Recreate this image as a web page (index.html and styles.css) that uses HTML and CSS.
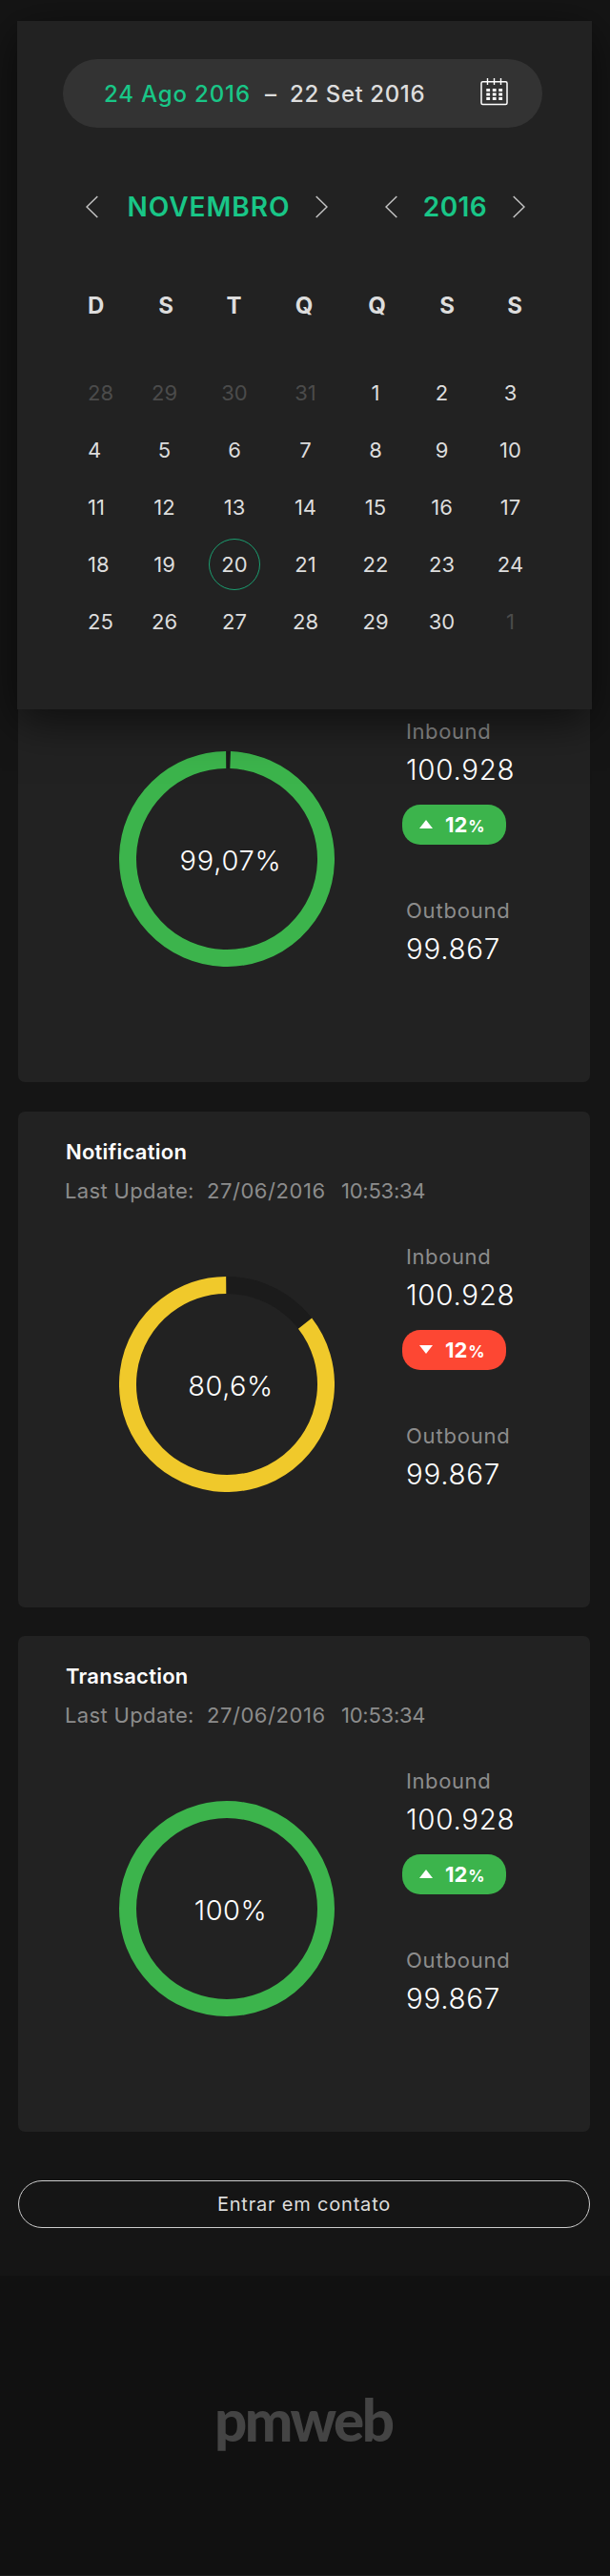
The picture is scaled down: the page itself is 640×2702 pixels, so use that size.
FILE: index.html
```html
<!DOCTYPE html>
<html lang="pt-BR">
<head>
<meta charset="utf-8">
<title>pmweb</title>
<link rel="stylesheet" href="styles.css">
</head>
<body>
<section class="calendar">
  <div class="range">
    <span class="range-from">24 Ago 2016</span>
    <span class="range-dash">–</span>
    <span class="range-to">22 Set 2016</span>
    <svg class="range-icon" width="29" height="29" viewBox="0 0 29 29">
      <rect x="1" y="3.7" width="27" height="23.8" rx="1.5" fill="none" stroke="#fff" stroke-width="1.5"/>
      <path d="M7.5 0v7M14.5 0v7M21.500 0v7" stroke="#fff" stroke-width="1.400"/>
      <path d="M6.300 12.500h16.800M6.300 17h16.800M6.300 21.500h16.800" stroke="#fff" stroke-width="2.800" stroke-dasharray="3.800 2.700"/>
    </svg>
  </div>
  <div class="pickers">
    <div class="picker picker-month">
      <svg class="chevron" viewBox="0 0 13 24"><path d="M12.300 1L1 12l11.300 11"/></svg>
      <span class="picker-label month-label">NOVEMBRO</span>
      <svg class="chevron" viewBox="0 0 13 24"><path d="M.7 1L12 12L.7 23"/></svg>
    </div>
    <div class="picker picker-year">
      <svg class="chevron" viewBox="0 0 13 24"><path d="M12.300 1L1 12l11.300 11"/></svg>
      <span class="picker-label year-label">2016</span>
      <svg class="chevron" viewBox="0 0 13 24"><path d="M.7 1L12 12L.7 23"/></svg>
    </div>
  </div>
  <div class="weekdays"><span>D</span><span>S</span><span>T</span><span>Q</span><span>Q</span><span>S</span><span>S</span></div>
  <div class="days">
    <span class="out">28</span><span class="out">29</span><span class="out">30</span><span class="out">31</span><span>1</span><span>2</span><span>3</span>
    <span>4</span><span>5</span><span>6</span><span>7</span><span>8</span><span>9</span><span>10</span>
    <span>11</span><span>12</span><span>13</span><span>14</span><span>15</span><span>16</span><span>17</span>
    <span>18</span><span>19</span><span class="today">20</span><span>21</span><span>22</span><span>23</span><span>24</span>
    <span>25</span><span>26</span><span>27</span><span>28</span><span>29</span><span>30</span><span class="out">1</span>
  </div>
</section>

<main class="cards">
  <article class="card card-first">
    <div class="card-body">
      <div class="ring">
        <svg viewBox="0 0 226 226"><circle class="track" cx="113" cy="113" r="104"/><circle class="arc green" cx="113" cy="113" r="104" pathLength="100" stroke-dasharray="99.300 .7" transform="rotate(-88 113 113)"/></svg>
        <span class="ring-value rv-a">99,07%</span>
      </div>
      <div class="stats">
        <div class="label label-in">Inbound</div>
        <div class="value value-in">100.928</div>
        <div class="badge up"><svg viewBox="0 0 14 9"><path d="M7 0l7 9H0z"/></svg><b>12</b><small>%</small></div>
        <div class="label label-out">Outbound</div>
        <div class="value value-out">99.867</div>
      </div>
    </div>
  </article>
  <article class="card">
    <h2 class="title">Notification</h2>
    <p class="update"><span class="u-label">Last Update:</span><span class="u-date">27/06/2016</span><span class="u-time">10:53:34</span></p>
    <div class="card-body">
      <div class="ring">
        <svg viewBox="0 0 226 226"><circle class="track" cx="113" cy="113" r="104"/><circle class="arc yellow" cx="113" cy="113" r="104" pathLength="360" stroke-dasharray="307.500 52.500" transform="rotate(-37.900 113 113)"/></svg>
        <span class="ring-value rv-b">80,6%</span>
      </div>
      <div class="stats">
        <div class="label label-in">Inbound</div>
        <div class="value value-in">100.928</div>
        <div class="badge down"><svg viewBox="0 0 14 9"><path d="M0 0h14L7 9z"/></svg><b>12</b><small>%</small></div>
        <div class="label label-out">Outbound</div>
        <div class="value value-out">99.867</div>
      </div>
    </div>
  </article>
  <article class="card">
    <h2 class="title title-b">Transaction</h2>
    <p class="update"><span class="u-label">Last Update:</span><span class="u-date">27/06/2016</span><span class="u-time">10:53:34</span></p>
    <div class="card-body">
      <div class="ring">
        <svg viewBox="0 0 226 226"><circle class="arc green" cx="113" cy="113" r="104"/></svg>
        <span class="ring-value rv-c">100%</span>
      </div>
      <div class="stats">
        <div class="label label-in">Inbound</div>
        <div class="value value-in">100.928</div>
        <div class="badge up"><svg viewBox="0 0 14 9"><path d="M7 0l7 9H0z"/></svg><b>12</b><small>%</small></div>
        <div class="label label-out">Outbound</div>
        <div class="value value-out">99.867</div>
      </div>
    </div>
  </article>
  <a class="contact">Entrar em contato</a>
</main>

<footer class="footer">
  <svg class="logo" width="240" height="110" viewBox="0 0 240 110"><text x="25" y="72" textLength="189" lengthAdjust="spacing">pmweb</text></svg>
</footer>
</body>
</html>
```
FILE: styles.css
```css
* { box-sizing: border-box; }
body {
  margin: 0;
  width: 640px;
  height: 2702px;
  position: relative;
  overflow-x: hidden;
  background: #151515;
  color: #ddd;
  font-family: Inter, "Open Sans", sans-serif;
  font-size: 22px;
  display: flex;
  flex-direction: column;
}
span, b, small, a { white-space: nowrap; }

/* calendar overlay covers the first card's header */
.calendar {
  position: absolute;
  z-index: 2;
  left: 18px;
  top: 22px;
  width: 603px;
  height: 722px;
  padding: 40px 52px 0 48px;
  background: #222;
  box-shadow: 0 12px 44px rgba(0, 0, 0, .6);
}
.range {
  display: flex;
  align-items: center;
  height: 72px;
  padding: 0 36px 0 43px;
  border-radius: 36px;
  background: #333;
  font-size: 24px;
  font-weight: 500;
}
.range-from { width: 169px; color: #19c687; letter-spacing: .85px; }
.range-dash { width: 26px; }
.range-to { flex: 1; letter-spacing: .6px; }
.range-icon { flex: none; margin-top: -4px; }

.pickers { display: flex; margin-top: 67px; padding: 0 18px 0 24px; justify-content: space-between; }
.picker { display: flex; align-items: center; justify-content: space-between; height: 32px; }
.picker-month { width: 254px; }
.picker-year { width: 147px; }
.chevron { width: 13px; height: 24px; fill: none; stroke: #c4c4c4; stroke-width: 1.5; }
.picker-label { color: #19c687; font-size: 28px; font-weight: 600; letter-spacing: .4px; }
.month-label { letter-spacing: 1px; padding-left: 4px; }

.weekdays, .days { display: grid; margin-left: 26px; }
.weekdays {
  grid-template-columns: 44px 76px 67px 80px 73px 74px 68px;
  margin-top: 68px;
  line-height: 40px;
  font-size: 24px;
  font-weight: 700;
  text-align: center;
}
.weekdays span:first-child { text-align: left; }
.days {
  grid-template-columns: 44px 73px 74px 75px 72px 67px 77px;
  grid-auto-rows: 60px;
  margin-top: 41px;
  align-items: center;
  justify-items: center;
}
.days span:nth-child(7n+1) { justify-self: start; }
.out { color: #4b4b4b; }
.today {
  display: grid;
  place-items: center;
  width: 54px;
  height: 54px;
  border: 1px solid #1b9e70;
  border-radius: 50%;
}

.cards { padding: 615px 21px 0 19px; height: 2387px; }
.card {
  display: flex;
  flex-direction: column;
  height: 520px;
  padding: 27px 0 0 49px;
  margin-bottom: 30px;
  border-radius: 7px;
  background: #222;
}
.card-first { margin-bottom: 31px; }
.title { margin: 0; color: #fff; font-size: 22px; line-height: 31px; font-weight: 600; letter-spacing: .25px; padding-left: 1px; }
.update { display: flex; margin: 10px 0 0; line-height: 30px; color: #8c8c8c; font-weight: 400; letter-spacing: .35px; }
.u-label { width: 149px; }
.u-date { width: 141px; letter-spacing: .55px; }
.u-time { letter-spacing: -.25px; }
.card-body { display: flex; height: 383px; margin-top: auto; padding-left: 57px; }
.ring { display: grid; width: 226px; height: 226px; margin-top: 36px; place-items: center; }
.ring > * { grid-area: 1 / 1; }
.ring svg { width: 226px; height: 226px; }
.ring circle { fill: none; stroke-width: 18; }
.track { stroke: #1b1b1b; }
.green { stroke: #3cb44c; }
.yellow { stroke: #f0c92b; }
.ring-value { padding: 3px 0 0 8px; color: #fff; font-size: 29px; font-weight: 300; letter-spacing: .5px; }
.rv-a { letter-spacing: .8px; }
.stats { margin-left: 71px; color: #fff; }
.label { padding-left: 4px; line-height: 30px; color: #8c8c8c; font-weight: 400; letter-spacing: .6px; }
.value { padding-left: 4px; font-size: 29.5px; line-height: 36px; font-weight: 300; letter-spacing: .7px; }
.value-in { margin-top: 7px; }
.value-out { margin-top: 7px; }
.label-out { margin-top: 54px; letter-spacing: .8px; }
.badge {
  display: flex;
  align-items: center;
  width: 109px;
  height: 42px;
  margin-top: 19px;
  padding-left: 18px;
  border-radius: 19px;
}
.badge svg { width: 14px; height: 9px; margin: 0 13px 1px 0; fill: #fff; }
.badge b { font-weight: 700; }
.badge small { padding: 3px 0 0 1px; font-size: 17px; font-weight: 700; }
.up { background: #3cb44c; }
.down { background: #fd4733; }
.contact {
  display: flex;
  align-items: center;
  justify-content: center;
  height: 50px;
  margin-top: 51px;
  border: 1px solid #ccc;
  border-radius: 25px;
  font-size: 20px;
  letter-spacing: .8px;
}
.footer { display: flex; flex: 1; justify-content: center; padding-top: 102px; background: #111; border-bottom: 1px solid #1e1e1e; }
.logo text { font: 900 60px Lato, sans-serif; fill: #444; }
```
